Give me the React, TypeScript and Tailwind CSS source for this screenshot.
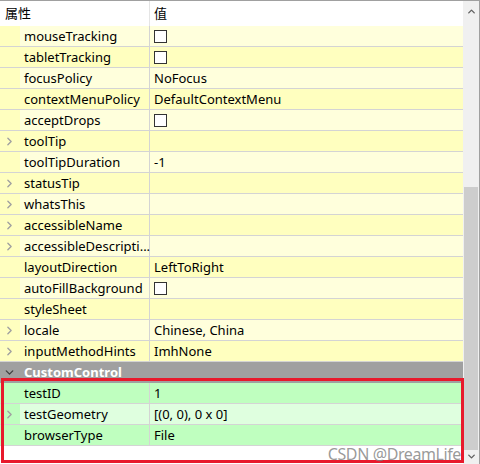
import { ChevronDown, ChevronRight, ChevronUp } from "lucide-react";

type Row = {
  name: string;
  value?: string;
  check?: boolean;
  expand?: boolean;
};

const yellowRows: Row[] = [
  { name: "mouseTracking", check: true },
  { name: "tabletTracking", check: true },
  { name: "focusPolicy", value: "NoFocus" },
  { name: "contextMenuPolicy", value: "DefaultContextMenu" },
  { name: "acceptDrops", check: true },
  { name: "toolTip", expand: true },
  { name: "toolTipDuration", value: "-1" },
  { name: "statusTip", expand: true },
  { name: "whatsThis", expand: true },
  { name: "accessibleName", expand: true },
  { name: "accessibleDescripti...", expand: true },
  { name: "layoutDirection", value: "LeftToRight" },
  { name: "autoFillBackground", check: true },
  { name: "styleSheet" },
  { name: "locale", value: "Chinese, China", expand: true },
  { name: "inputMethodHints", value: "ImhNone", expand: true },
];

const greenRows: Row[] = [
  { name: "testID", value: "1" },
  { name: "testGeometry", value: "[(0, 0), 0 x 0]", expand: true },
  { name: "browserType", value: "File" },
];

const font = { fontFamily: '"Noto Sans", "Noto Sans CJK SC", sans-serif' };

const PropRow = ({
  row,
  strip,
  light,
  dark,
  alt,
}: {
  row: Row;
  strip: string;
  light: string;
  dark: string;
  alt: boolean;
}) => (
  <div className="flex h-[21px] border-b border-[#d4d4d4] text-[13px] text-black">
    <div className={`w-[20px] flex items-center justify-center ${strip}`}>
      {row.expand && (
        <ChevronRight size={13} strokeWidth={2.5} className="text-[#a0a0a0] -ml-[1px]" />
      )}
    </div>
    <div
      className={`w-[130px] pl-[4px] flex items-center border-r border-[#d4d4d4] ${
        alt ? dark : light
      }`}
    >
      <span className="leading-none">{row.name}</span>
    </div>
    <div className={`flex-1 pl-[4px] flex items-center ${alt ? dark : light}`}>
      {row.check ? (
        <div className="w-[13px] h-[13px] border border-[#333333] bg-white" />
      ) : (
        <span className="leading-none">{row.value}</span>
      )}
    </div>
  </div>
);

export default function App() {
  return (
    <div
      className="relative w-[480px] h-[464px] overflow-hidden bg-white border-t border-r border-[#a0a0a0]"
      style={font}
    >
      <div className="flex h-full">
        <div className="w-[463px] flex flex-col">
          <div className="flex h-[25px] shrink-0 text-[13px] bg-white">
            <div className="w-[150px] pl-[5px] flex items-center border-r border-[#e5e5e5]">
              属性
            </div>
            <div className="flex-1 pl-[4px] flex items-center">值</div>
          </div>

          {yellowRows.map((r, i) => (
            <PropRow
              key={r.name}
              row={r}
              strip="bg-[#ffffbf]"
              light="bg-[#ffffdc]"
              dark="bg-[#ffffbf]"
              alt={i % 2 === 1}
            />
          ))}

          <div className="flex h-[21px] shrink-0 items-center bg-[#a0a0a0] text-[13px] font-bold text-white">
            <div className="w-[20px] flex items-center justify-center">
              <ChevronDown size={13} strokeWidth={2.5} className="text-[#404040] -ml-[1px]" />
            </div>
            <span className="pl-[4px] leading-none">CustomControl</span>
          </div>

          {greenRows.map((r, i) => (
            <PropRow
              key={r.name}
              row={r}
              strip="bg-[#bfffbf]"
              light="bg-[#bfffbf]"
              dark="bg-[#dfffdf]"
              alt={i % 2 === 1}
            />
          ))}
        </div>

        <div className="w-[16px] bg-[#f0f0f0] flex flex-col items-center">
          <ChevronUp size={11} strokeWidth={3} className="text-[#606060] mt-[5px]" />
          <div className="mt-[170px] w-[14px] h-[263px] bg-[#cdcdcd]" />
          <ChevronDown size={11} strokeWidth={3} className="text-[#606060] mt-[1px]" />
        </div>
      </div>

      <div className="absolute left-[1px] top-[377px] w-[463px] h-[85px] border-[3px] border-[#e8192c] pointer-events-none" />
      <div className="absolute right-[18px] top-[445px] text-[16px] leading-none text-[#808080]/80 tracking-tight">
        CSDN @DreamLife
      </div>
    </div>
  );
}
